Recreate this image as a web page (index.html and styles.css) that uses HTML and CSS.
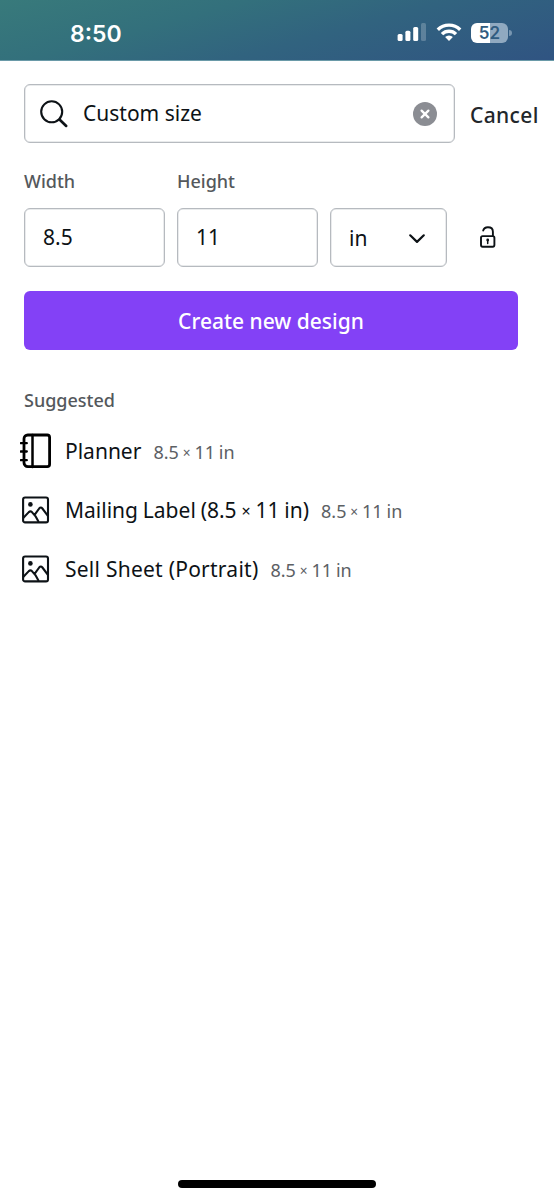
FILE: index.html
```html
<!DOCTYPE html>
<html lang="en">
<head>
<meta charset="utf-8">
<title>Custom size</title>
<link rel="stylesheet" href="styles.css">
</head>
<body>
<div class="screen">
  <header class="status">
    <span class="time">8:50</span>
    <div class="indicators">
      <svg class="signal" width="29" height="20" viewBox="0 0 29 20" fill="#fff">
        <rect x="0.6" y="12" width="5" height="7" rx="1.5"/>
        <rect x="8.4" y="8.8" width="5" height="10.2" rx="1.5"/>
        <rect x="16.2" y="5" width="5" height="14" rx="1.5"/>
        <rect x="24" y="1" width="5" height="18" rx="1.5" opacity=".22"/>
      </svg>
      <svg class="wifi" width="26" height="20" viewBox="0 0 26 20" fill="none" stroke="#fff" stroke-width="3.4">
        <path d="M1.8 7.7a16 16 0 0 1 22.4 0"/>
        <path d="M6 12.1a10 10 0 0 1 14 0"/>
        <path d="M13 19l-3.9-4a5.6 5.6 0 0 1 7.8 0z" fill="#fff" stroke="none"/>
      </svg>
      <div class="battery"><span class="level">52</span><i class="cap"></i></div>
    </div>
  </header>
  <main class="content">
    <div class="search-row">
      <div class="box search">
        <svg width="30" height="30" viewBox="0 0 30 30" fill="none" stroke="#0d1216" stroke-width="2.1" stroke-linecap="round">
          <circle cx="11.7" cy="12.8" r="10.5"/><path d="M19.5 20.6l6.7 6.3" stroke-width="2.7"/>
        </svg>
        <span class="query">Custom size</span>
        <svg class="clear" width="24" height="24" viewBox="0 0 24 24">
          <circle cx="12" cy="12" r="12" fill="#8b8d93"/>
          <path d="M8.6 8.6l6.8 6.8M15.4 8.6l-6.8 6.8" stroke="#fff" stroke-width="2.3" stroke-linecap="round"/>
        </svg>
      </div>
      <span class="cancel">Cancel</span>
    </div>
    <div class="size-row">
      <label class="field"><span class="caption">Width</span><span class="box value">8.5</span></label>
      <label class="field"><span class="caption">Height</span><span class="box value">11</span></label>
      <div class="box unit"><span>in</span>
        <svg class="chevron" width="18" height="12" viewBox="0 0 18 12" fill="none" stroke="#0d1216" stroke-width="2.2" stroke-linecap="round" stroke-linejoin="round"><path d="M2.2 2.3L9 8.9l6.8-6.6"/></svg>
      </div>
      <svg class="lock" width="18" height="24" viewBox="0 0 18 24" fill="none" stroke="#0d1216" stroke-width="1.9" stroke-linecap="round">
        <rect x="2" y="11.1" width="13.4" height="10.6" rx="1.6"/>
        <path d="M4.2 5.6C4.8 3.4 6.5 2.3 8.9 2.3c3 0 5 1.6 5 4.4v4"/>
        <path d="M8.7 15.5v3" stroke-width="1.5"/><circle cx="8.7" cy="15" r="1.4" fill="#0d1216" stroke="none"/>
      </svg>
    </div>
    <div class="create"><span>Create new design</span></div>
    <h2 class="caption suggested">Suggested</h2>
    <ul class="list">
      <li>
        <svg class="icon" width="32" height="36" viewBox="0 0 32 36" fill="none" stroke="#000" stroke-linecap="round">
          <path d="M7.8 2h19.4a2.4 2.4 0 0 1 2.4 2.4v26.8a2.4 2.4 0 0 1-2.4 2.4H7.8A3.8 3.8 0 0 1 4 29.8V5.8A3.8 3.8 0 0 1 7.8 2z" stroke-width="2.8"/>
          <path d="M12.5 2v32" stroke-width="2.5"/>
          <path d="M.8 10.2h6M.8 18.5h6M.8 27.2h6" stroke-width="2.3"/>
        </svg>
        <span class="name">Planner</span><span class="dims">8.5 <span class="times">×</span> 11 in</span>
      </li>
      <li>
        <svg class="icon" width="32" height="36" viewBox="0 0 32 36" fill="none" stroke="#0d1216" stroke-width="2.1" stroke-linejoin="round">
          <rect x="3.1" y="5.5" width="24.9" height="24.9" rx="2"/>
          <circle cx="10.4" cy="12.4" r="2.3" fill="#0d1216" stroke="none"/>
          <path d="M3.2 26l5.6-5.9q1.6-1.4 3.1 0l3.5 4 3.3 5.8M14.4 23.2l4.8-6.7q1.6-1.9 3.2 0l5.5 7.3"/>
        </svg>
        <span class="name mailing">Mailing Label (8.5 <span class="times">×</span> 11 in)</span><span class="dims">8.5 <span class="times">×</span> 11 in</span>
      </li>
      <li>
        <svg class="icon" width="32" height="36" viewBox="0 0 32 36" fill="none" stroke="#0d1216" stroke-width="2.1" stroke-linejoin="round">
          <rect x="3.1" y="5.5" width="24.9" height="24.9" rx="2"/>
          <circle cx="10.4" cy="12.4" r="2.3" fill="#0d1216" stroke="none"/>
          <path d="M3.2 26l5.6-5.9q1.6-1.4 3.1 0l3.5 4 3.3 5.8M14.4 23.2l4.8-6.7q1.6-1.9 3.2 0l5.5 7.3"/>
        </svg>
        <span class="name sell">Sell Sheet (Portrait)</span><span class="dims">8.5 <span class="times">×</span> 11 in</span>
      </li>
    </ul>
  </main>
  <footer class="home"><div class="home-bar"></div></footer>
</div>
</body>
</html>
```
FILE: styles.css
```css
* { box-sizing: border-box; }
body { margin: 0; background: #fff; color: #0d1216; font-family: "Noto Sans", sans-serif; font-size: 21px; }
svg { display: block; flex: none; }
.screen { width: 554px; height: 1200px; display: flex; flex-direction: column; white-space: nowrap; overflow: hidden; }
.status { height: 61px; flex: none; display: flex; justify-content: space-between; padding: 0 42px 0 70px; color: #fff;
  background: linear-gradient(165deg, #387a7b 0%, #33707c 32%, #31637f 58%, #305482 100%); border-bottom: 1px solid #6a9aa8; }
.time { font: 600 23px/30px Inter, sans-serif; padding-top: 19px; }
.indicators { display: flex; align-items: flex-start; padding-top: 23px; }
.signal { margin-top: -1px; }
.wifi { margin: -1px 9px 0 10px; }
.battery { position: relative; width: 37px; height: 20px; border-radius: 6px; background: linear-gradient(90deg, #fff 52%, #90a9c0 52%); margin-right: 4px; }
.level { display: block; text-align: center; font: 600 17px/20px Inter, sans-serif; color: #315c80; }
.cap { position: absolute; right: -4px; top: 7px; width: 3px; height: 6px; border-radius: 0 3px 3px 0; background: #7896b1; }
.content { padding: 23px 14px 0 24px; flex: 1; }
.box { border: 1px solid #b6babf; box-shadow: inset 0 0 0 .5px #d4d7da; border-radius: 6px; height: 59px; display: flex; align-items: center; }
.search-row { display: flex; align-items: center; }
.search { width: 431px; padding: 0 17px 0 15px; }
.query { margin-left: 13px; padding-bottom: 1px; }
.clear { margin-left: auto; }
.cancel { margin-left: 15px; padding-top: 3px; font-weight: 500; color: #22272b; letter-spacing: .35px; }
.size-row { display: flex; align-items: flex-end; gap: 12px; margin-top: 25px; }
.field { width: 141px; display: block; }
.caption { display: block; margin: 0; font-size: 18px; line-height: 26px; font-weight: 500; color: #54585c; }
.field .box { margin-top: 14px; }
.value { padding-left: 18px; padding-bottom: 1px; }
.unit { width: 117px; padding: 0 20px 0 18px; justify-content: space-between; }
.chevron { position: relative; top: 1px; }
.lock { margin: 0 0 18px 20px; }
.create { margin-top: 24px; width: 494px; height: 59px; border-radius: 6px; background: #8341f6; color: #fff; font-weight: 500; display: flex; align-items: center; justify-content: center; }
.suggested { margin-top: 37px; }
.list { list-style: none; margin: 8px 0 0 -4px; padding: 0; }
.list li { height: 59px; display: flex; align-items: center; }
.icon { margin-right: 13px; }
.sell { letter-spacing: .25px; }
.mailing { word-spacing: -.6px; }
.times { font-size: .76em; position: relative; top: -1px; }
.dims { font-size: 18px; color: #5c6064; margin-left: 12px; padding-top: 2px; word-spacing: -.8px; }
.home { height: 20px; flex: none; display: flex; justify-content: center; align-items: flex-start; }
.home-bar { width: 198px; height: 8px; border-radius: 4px; background: #000; }
```
